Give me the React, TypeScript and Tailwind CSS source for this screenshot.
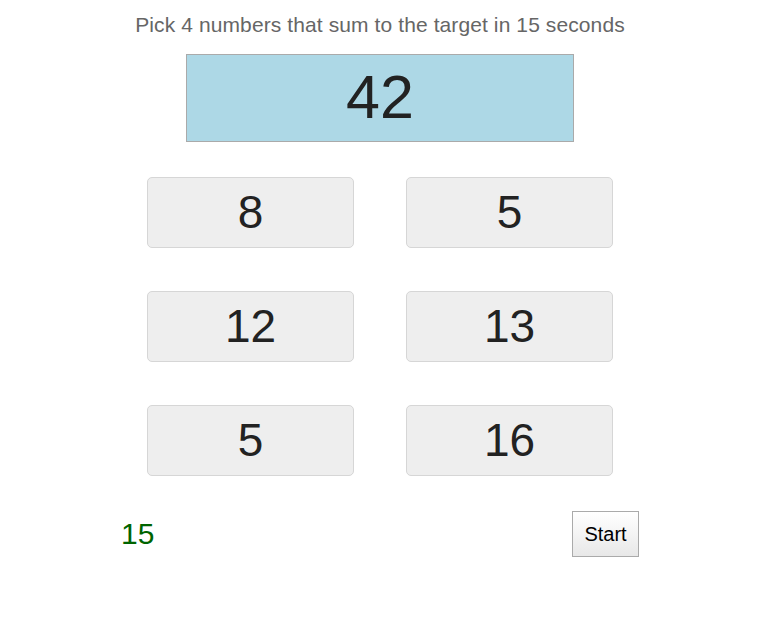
import { useState } from "react";

const NUMBERS = [8, 5, 12, 13, 5, 16];

export default function App() {
  const [picked, setPicked] = useState<number[]>([]);

  const toggle = (i: number) => {
    setPicked((prev) => (prev.includes(i) ? prev.filter((p) => p !== i) : [...prev, i]));
  };

  return (
    <div className="w-[762px] h-[622px] bg-white font-['Liberation_Sans',Arial,sans-serif]">
      <div className="w-[518px] ml-[121px] pt-[12px] flex flex-col items-center">
        <p className="text-[21px] leading-[26px] text-[#666] tracking-[0.1px] whitespace-nowrap">
          Pick 4 numbers that sum to the target in 15 seconds
        </p>
        <div className="mt-[16px] w-[388px] h-[88px] bg-[#add8e6] border border-[#aaa] flex items-center justify-center text-[61px] text-[#222]">
          42
        </div>
        <div className="mt-[35px] grid grid-cols-2 gap-x-[52px] gap-y-[43px]">
          {NUMBERS.map((n, i) => (
            <button
              key={i}
              onClick={() => toggle(i)}
              className={`w-[207px] h-[71px] rounded-[5px] border border-[#d6d6d6] flex items-center justify-center text-[46px] text-[#222] ${
                picked.includes(i) ? "bg-[#ccc]" : "bg-[#eee]"
              }`}
            >
              {n}
            </button>
          ))}
        </div>
        <div className="mt-[35px] w-full flex items-center justify-between">
          <span className="text-[30px] text-[#006400] leading-none">15</span>
          <button className="w-[67px] h-[46px] border border-[#aaa] bg-gradient-to-b from-white to-[#e8e8e8] text-[20px] text-black">
            Start
          </button>
        </div>
      </div>
    </div>
  );
}
